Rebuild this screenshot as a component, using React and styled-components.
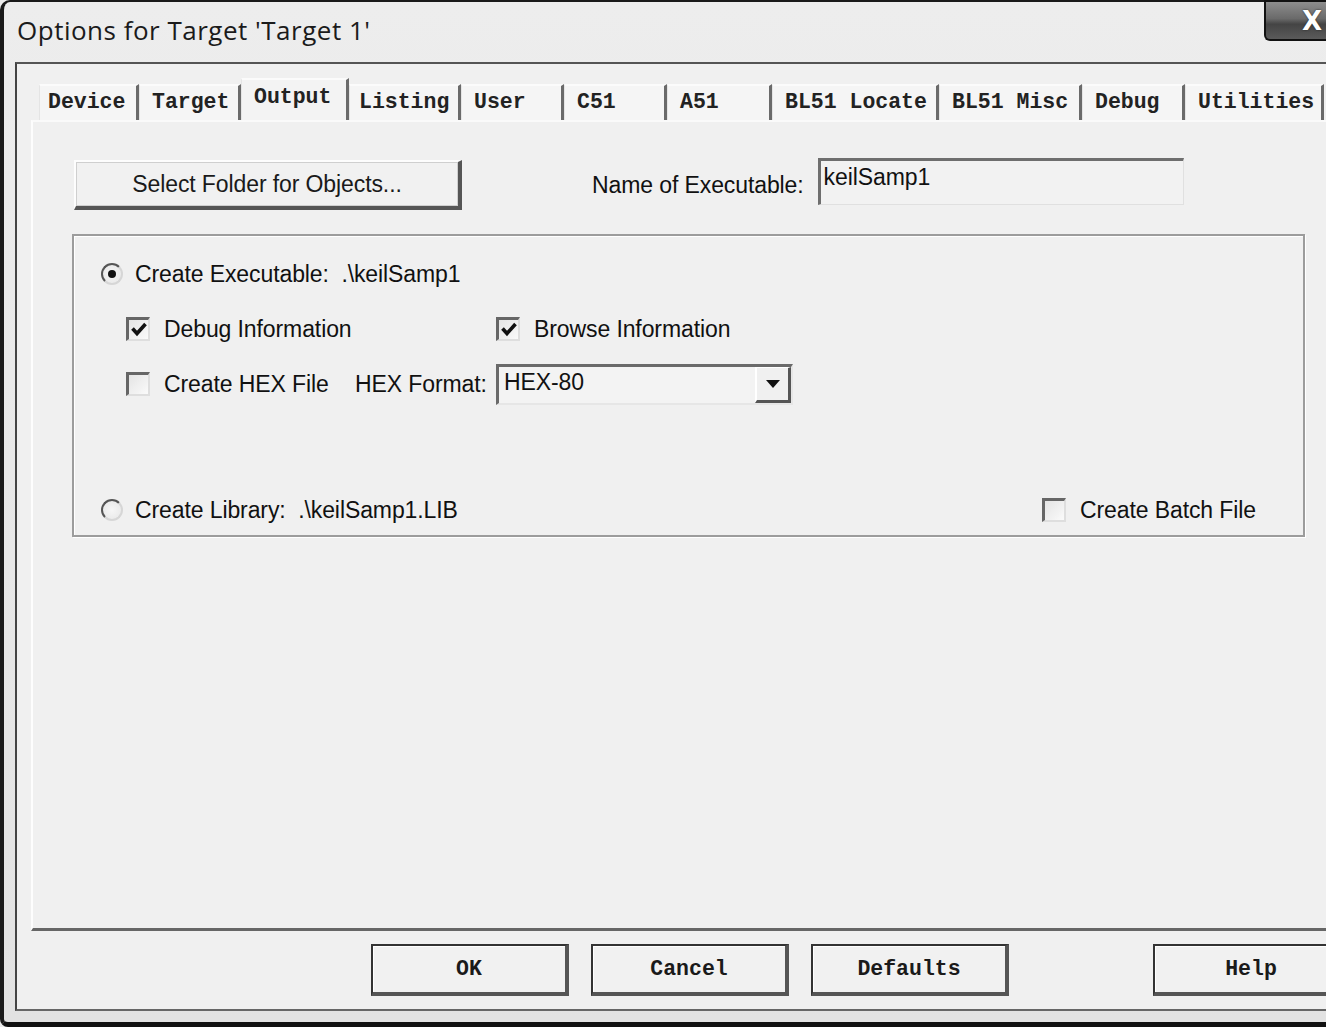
import React from "react";
import styled, { createGlobalStyle } from "styled-components";

const Global = createGlobalStyle`
  html, body { margin: 0; padding: 0; background: #ececec; overflow: hidden; }
  * { box-sizing: border-box; }
`;

const Window = styled.div`
  width: 1326px;
  height: 1027px;
  display: flex;
  flex-direction: column;
  background: linear-gradient(180deg, #ededed 0%, #e2e2e2 100%);
  border-top: 2px solid #1a1a1a;
  border-left: 4px solid #1a1a1a;
  border-bottom: 5px solid #111;
  border-top-left-radius: 10px;
  border-bottom-left-radius: 8px;
  font-family: "Liberation Sans", Arial, sans-serif;
  color: #111;
`;

const TitleBar = styled.div`
  height: 60px;
  display: flex;
  justify-content: space-between;
  align-items: flex-start;
  padding-left: 13px;
`;

const Title = styled.div`
  font-family: "Open Sans", "Liberation Sans", sans-serif;
  font-size: 26px;
  letter-spacing: 0.5px;
  color: #1b1b1b;
  margin-top: 10px;
`;

const CloseButton = styled.div`
  width: 62px;
  height: 41px;
  margin-top: -2px;
  border: 2px solid #111;
  border-right: none;
  border-bottom-left-radius: 6px;
  background: linear-gradient(180deg, #8d8d8d 0%, #6a6a6a 45%, #444 60%, #5a5a5a 100%);
  display: flex;
  align-items: center;
  justify-content: flex-end;
  padding-right: 4px;
  color: #fff;
  font-family: "DejaVu Sans", sans-serif;
  font-weight: bold;
  font-size: 26px;
  text-shadow: 0 0 2px #222;
`;

const Client = styled.div`
  flex: 1;
  margin-left: 11px;
  margin-bottom: 11px;
  background: #f0f0f0;
  border-top: 2px solid #555;
  border-left: 2px solid #444;
  border-bottom: 2px solid #666;
  display: flex;
  flex-direction: column;
  padding: 14px 0 0 14px;
`;

const TabRow = styled.div`
  display: flex;
  align-items: flex-end;
  padding-left: 8px;
  height: 42px;
`;

const Tab = styled.div`
  width: ${(p) => p.w}px;
  flex-shrink: 0;
  height: ${(p) => (p.active ? 42 : 36)}px;
  padding-left: ${(p) => p.pl || 12}px;
  display: flex;
  align-items: center;
  padding-bottom: ${(p) => (p.active ? 6 : 2)}px;
  background: ${(p) => (p.active ? "#f3f3f3" : "#f5f5f5")};
  border-top: 2px solid #fbfbfb;
  border-left: 1px solid #e4e4e4;
  border-right: 3px solid #6a6a6a;
  font-family: "Liberation Mono", "DejaVu Sans Mono", monospace;
  font-weight: bold;
  font-size: 21.5px;
  color: #222;
  white-space: nowrap;
  overflow: hidden;
`;

const Panel = styled.div`
  flex: 1;
  border-left: 2px solid #fdfdfd;
  border-top: 2px solid #fafafa;
  border-bottom: 3px solid #666;
  padding: 38px 0 0 41px;
  display: flex;
  flex-direction: column;
  gap: 24px;
`;

const TopRow = styled.div`
  display: flex;
  align-items: center;
`;

const Button = styled.div`
  width: ${(p) => p.w}px;
  height: ${(p) => p.h || 50}px;
  flex-shrink: 0;
  display: flex;
  align-items: center;
  justify-content: center;
  background: #f1f1f1;
  border-top: 2px solid ${(p) => (p.dark ? "#333" : "#fdfdfd")};
  border-left: 2px solid ${(p) => (p.dark ? "#333" : "#fdfdfd")};
  border-right: 4px solid #555;
  border-bottom: 4px solid #555;
  box-shadow: ${(p) => (p.dark ? "inset 1px 1px 0 #fff" : "inset 0 0 0 1px #cfcfcf")};
  margin-left: ${(p) => p.ml || 0}px;
  font-family: ${(p) =>
    p.mono ? `"Liberation Mono", "DejaVu Sans Mono", monospace` : `"Liberation Sans", Arial, sans-serif`};
  font-weight: ${(p) => (p.mono ? "bold" : "normal")};
  font-size: ${(p) => (p.mono ? 21.5 : 23)}px;
  letter-spacing: ${(p) => (p.mono ? 0 : -0.1)}px;
  color: #1a1a1a;
  white-space: nowrap;
`;

const Label = styled.span`
  font-size: 23px;
  letter-spacing: -0.1px;
  white-space: nowrap;
  margin-left: ${(p) => p.ml || 0}px;
`;

const TextField = styled.div`
  width: 366px;
  height: 47px;
  margin-left: 14px;
  margin-top: -7px;
  background: #f2f2f2;
  border-top: 3px solid #6e6e6e;
  border-left: 3px solid #6e6e6e;
  border-right: 1px solid #e0e0e0;
  border-bottom: 1px solid #e0e0e0;
  padding: 3px 0 0 3px;
  font-size: 23px;
  letter-spacing: -0.1px;
`;

const Group = styled.div`
  width: 1233px;
  height: 303px;
  margin-left: -2px;
  border: 2px solid #9c9c9c;
  box-shadow: inset 1px 1px 0 #fff, 1px 1px 0 #fff;
  padding: 24px 0 0 27px;
  display: flex;
  flex-direction: column;
`;

const Row = styled.div`
  display: flex;
  align-items: center;
  height: ${(p) => p.h}px;
  margin-top: ${(p) => p.mt || 0}px;
  padding-left: ${(p) => p.pl || 0}px;
`;

const Cell = styled.div`
  display: flex;
  align-items: center;
  width: ${(p) => p.w}px;
  flex-shrink: 0;
`;

const Radio = styled.div`
  width: 22px;
  height: 22px;
  border-radius: 50%;
  border: 2px solid #d6d6d6;
  border-top-color: #555;
  border-left-color: #555;
  background: radial-gradient(circle, #f6f6f6 0%, #e6e6e6 100%);
  display: flex;
  align-items: center;
  justify-content: center;
  margin-right: 12px;
  &::after {
    content: "";
    width: 8px;
    height: 8px;
    border-radius: 50%;
    background: ${(p) => (p.on ? "#111" : "transparent")};
  }
`;

const Check = styled.div`
  width: 24px;
  height: 24px;
  border-top: 3px solid #666;
  border-left: 3px solid #666;
  border-right: 2px solid #dedede;
  border-bottom: 2px solid #dedede;
  background: linear-gradient(135deg, #e4e4e4, #fafafa);
  display: flex;
  align-items: center;
  justify-content: center;
  margin-right: 14px;
`;

const Select = styled.div`
  width: 297px;
  height: 41px;
  display: flex;
  align-items: stretch;
  background: #f3f3f3;
  border-top: 3px solid #6a6a6a;
  border-left: 3px solid #6a6a6a;
  border-right: 2px solid #e6e6e6;
  border-bottom: 2px solid #e6e6e6;
`;

const SelectValue = styled.div`
  flex: 1;
  padding: 2px 0 0 5px;
  font-size: 23px;
  letter-spacing: -0.1px;
`;

const SelectArrow = styled.div`
  width: 36px;
  background: #f0f0f0;
  border-left: 2px solid #fff;
  border-top: 1px solid #fff;
  border-right: 3px solid #555;
  border-bottom: 3px solid #555;
  display: flex;
  align-items: center;
  justify-content: center;
`;

const Spacer = styled.div`
  flex: 1;
`;

const ButtonRow = styled.div`
  height: 78px;
  display: flex;
  align-items: center;
  padding-left: 340px;
  gap: 22px;
  overflow: hidden;
`;

function CheckMark() {
  return (
    <svg width="16" height="15" viewBox="0 0 16 15">
      <path d="M1.5 6.5 L6 11.5 L14.5 2" fill="none" stroke="#111" strokeWidth="3.6" />
    </svg>
  );
}

const tabs = [
  ["Device", 100, 8],
  ["Target", 102],
  ["Output", 108],
  ["Listing", 112, 9],
  ["User", 103],
  ["C51", 103],
  ["A51", 105],
  ["BL51 Locate", 167],
  ["BL51 Misc", 143],
  ["Debug", 103],
  ["Utilities", 139],
];

export default function App() {
  return (
    <>
      <Global />
      <Window>
        <TitleBar>
          <Title>Options for Target 'Target 1'</Title>
          <CloseButton>X</CloseButton>
        </TitleBar>
        <Client>
          <TabRow>
            {tabs.map(([name, w, pl]) => (
              <Tab key={name} w={w} pl={pl} active={name === "Output"}>
                {name}
              </Tab>
            ))}
          </TabRow>
          <Panel>
            <TopRow>
              <Button w={388} h={50}>Select Folder for Objects...</Button>
              <Label ml={130}>Name of Executable:</Label>
              <TextField>keilSamp1</TextField>
            </TopRow>
            <Group>
              <Row h={28}>
                <Radio on />
                <Label>Create Executable:&nbsp;&nbsp;.\keilSamp1</Label>
              </Row>
              <Row h={28} pl={25} mt={27}>
                <Cell w={370}>
                  <Check><CheckMark /></Check>
                  <Label>Debug Information</Label>
                </Cell>
                <Check><CheckMark /></Check>
                <Label>Browse Information</Label>
              </Row>
              <Row h={42} pl={25} mt={20}>
                <Cell w={229}>
                  <Check />
                  <Label>Create HEX File</Label>
                </Cell>
                <Cell w={141}>
                  <Label>HEX Format:</Label>
                </Cell>
                <Select>
                  <SelectValue>HEX-80</SelectValue>
                  <SelectArrow>
                    <svg width="14" height="8" viewBox="0 0 14 8">
                      <path d="M0 0 H14 L7 8 Z" fill="#111" />
                    </svg>
                  </SelectArrow>
                </Select>
              </Row>
              <Row h={28} mt={91}>
                <Radio />
                <Label>Create Library:&nbsp;&nbsp;.\keilSamp1.LIB</Label>
                <Spacer />
                <Cell w={261}>
                  <Check />
                  <Label>Create Batch File</Label>
                </Cell>
              </Row>
            </Group>
          </Panel>
          <ButtonRow>
            <Button dark mono w={198} h={52}>OK</Button>
            <Button dark mono w={198} h={52}>Cancel</Button>
            <Button dark mono w={198} h={52}>Defaults</Button>
            <Button dark mono w={198} h={52} ml={122}>Help</Button>
          </ButtonRow>
        </Client>
      </Window>
    </>
  );
}
